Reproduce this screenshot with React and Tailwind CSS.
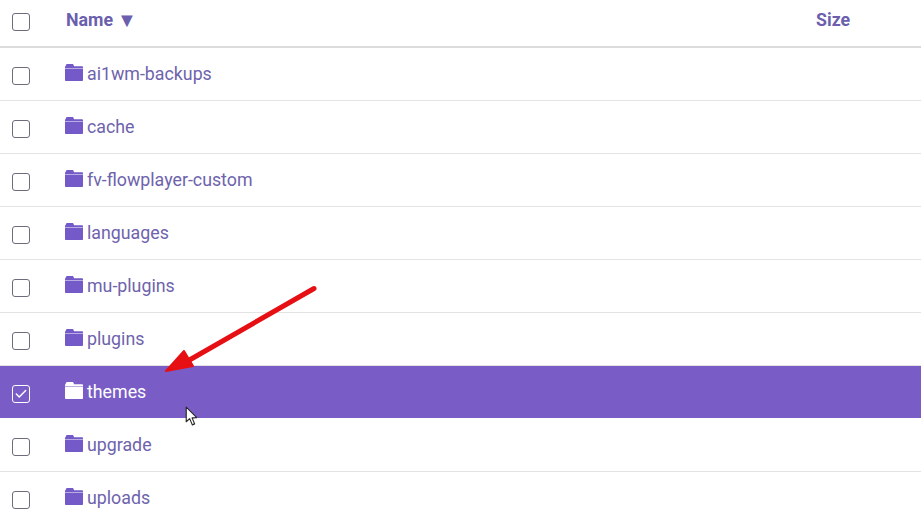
import { Check } from 'lucide-react';

const FOLDERS = [
  'ai1wm-backups',
  'cache',
  'fv-flowplayer-custom',
  'languages',
  'mu-plugins',
  'plugins',
  'themes',
  'upgrade',
  'uploads',
];

const SELECTED = 'themes';

const FolderIcon = ({ className }) => (
  <svg viewBox="0 0 18 17" className={className} fill="currentColor" aria-hidden="true">
    <path d="M.4 2.200 1.300.4C1.400.1 1.700 0 2 0h5.600c.3 0 .6.100.7.400l.8 1.800H17c.5 0 1 .4 1 1v1.300H0V3.200c0-.4.100-.7.400-1z" />
    <path d="M0 5h18v11.200c0 .5-.3.800-.8.800H.8c-.5 0-.8-.3-.8-.8z" />
  </svg>
);

const Checkbox = ({ checked, light }) => (
  <span
    className={`flex h-[18px] w-[18px] items-center justify-center rounded-[3px] border ${
      light ? 'border-white' : 'border-[#6f6a7c] bg-white'
    }`}
  >
    {checked && <Check className="h-[14px] w-[14px] text-white" strokeWidth={2.5} />}
  </span>
);

const FolderRow = ({ name }) => {
  const selected = name === SELECTED;
  return (
    <div
      className={`flex h-[53px] items-center border-b pl-3 ${
        selected ? 'border-white bg-[#795cc6] text-white' : 'border-[#e3e3e3] bg-white text-[#6e63ac]'
      }`}
    >
      <span className="mt-[4px]">
        <Checkbox checked={selected} light={selected} />
      </span>
      <div className="ml-[35px] flex items-center gap-[4px]">
        <FolderIcon className={`mb-[4px] h-[17px] w-[18px] ${selected ? 'text-white' : 'text-[#7459c8]'}`} />
        <span className="text-[17.800px] leading-6">{name}</span>
      </div>
    </div>
  );
};

export default function App() {
  return (
    <div className="relative h-[520px] w-[921px] overflow-hidden bg-white font-['Roboto',sans-serif]">
      {/* Header */}
      <div className="flex h-[48px] items-center border-b-2 border-[#dcdcdc] pl-3 text-[#6b5fae]">
        <span className="mb-[2px]">
          <Checkbox />
        </span>
        <div className="ml-[36px] flex w-[750px] items-center gap-[4px] pb-[6px] text-[17.800px] font-bold">
          <span>Name</span>
          <span className="text-[20px] leading-none">▼</span>
        </div>
        <span className="pb-[6px] text-[17.800px] font-bold">Size</span>
      </div>

      {FOLDERS.map((name) => (
        <FolderRow key={name} name={name} />
      ))}

      {/* Red annotation arrow */}
      <svg className="absolute left-[160px] top-[280px]" width="160" height="96" viewBox="0 0 160 96" aria-hidden="true">
        <path d="M154 8.500 L26 82" stroke="#e60f14" strokeWidth="5" strokeLinecap="round" />
        <path d="M6 91 L24 71 L33 86 Z" fill="#e60f14" stroke="#e60f14" strokeWidth="2" strokeLinejoin="round" />
      </svg>

      {/* Mouse pointer */}
      <svg className="absolute left-[184.500px] top-[406px]" width="14" height="21" viewBox="0 0 13 20" aria-hidden="true">
        <path
          d="M1 1 L1 15 L4.300 12 L6.800 18 L9 17 L6.600 11.300 L11 11 Z"
          fill="#fff"
          stroke="#2a2a2a"
          strokeWidth="1.100"
          strokeLinejoin="round"
        />
      </svg>
    </div>
  );
}
